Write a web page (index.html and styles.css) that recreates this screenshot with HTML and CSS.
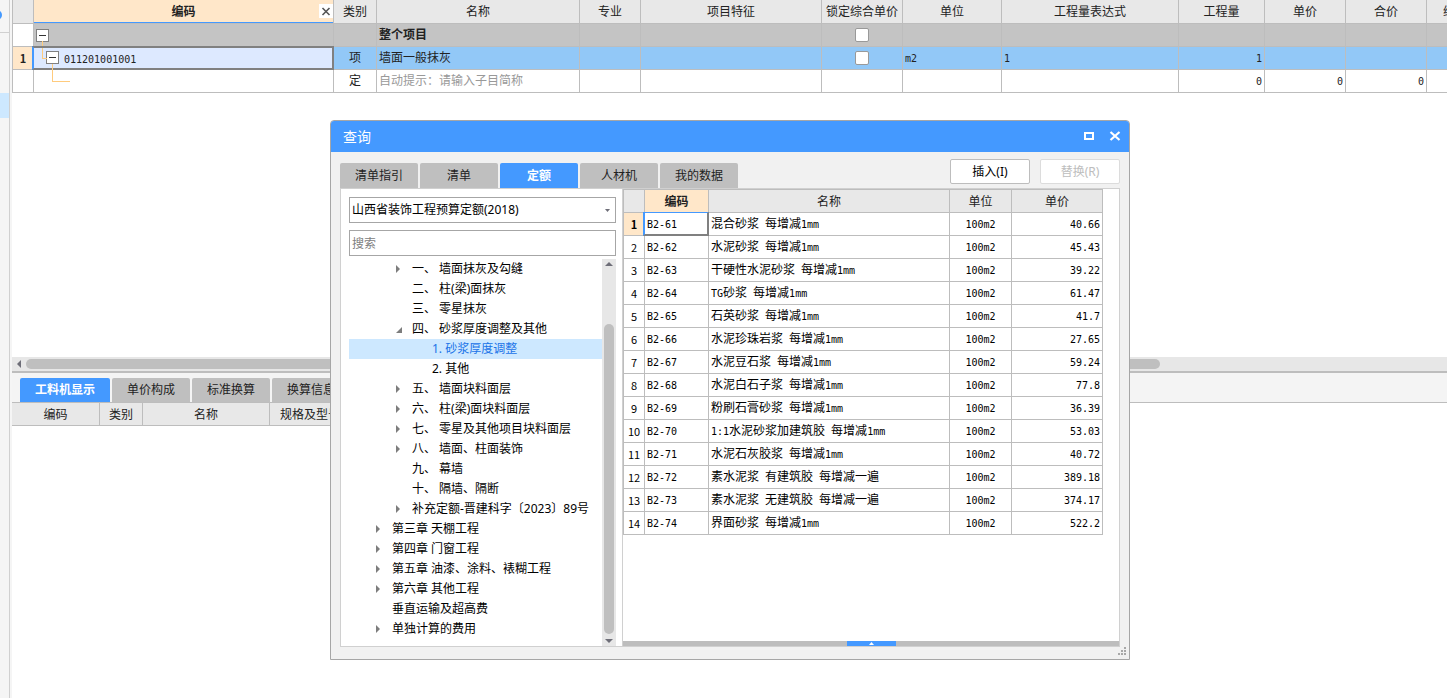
FILE: index.html
```html
<!DOCTYPE html>
<html lang="zh-CN">
<head>
<meta charset="utf-8">
<title>查询</title>
<link rel="stylesheet" href="styles.css">
</head>
<body>
<div class="app">
  <aside class="rail"><span class="rail-dot"></span><div class="rail-head"></div><div class="rail-mark"></div></aside>
  <main class="workspace">
    <section class="pane-top">
      <div class="grid-area">
        <table class="grid main-grid">
          <colgroup><col class="w22"><col class="w300"><col class="w43"><col class="w203"><col class="w61"><col class="w181"><col class="w81"><col class="w99"><col class="w177"><col class="w86"><col class="w81"><col class="w81"><col class="w81"></colgroup>
          <thead><tr><th></th><th class="active">编码<button class="col-close" aria-label="关闭"><svg width="14" height="14" viewBox="0 0 14 14"><path d="M3.500 4L10.500 11M10.500 4L3.500 11" stroke="#555" stroke-width="1.600"/></svg></button></th><th>类别</th><th>名称</th><th>专业</th><th>项目特征</th><th>锁定综合单价</th><th>单位</th><th>工程量表达式</th><th>工程量</th><th>单价</th><th>合价</th><th>综合单价</th></tr></thead>
          <tbody>
            <tr class="project"><td class="idx"></td><td class="node root"><button class="fold" aria-label="折叠"></button></td><td></td><td><b>整个项目</b></td><td></td><td></td><td class="center"><input type="checkbox" aria-label="锁定综合单价"></td><td></td><td></td><td></td><td></td><td></td><td></td></tr>
            <tr class="picked"><td class="idx current">1</td><td class="node child focus"><button class="fold" aria-label="折叠"></button><span class="n">011201001001</span></td><td class="center">项</td><td>墙面一般抹灰</td><td></td><td></td><td class="center"><input type="checkbox" aria-label="锁定综合单价"></td><td><span class="n">m2</span></td><td><span class="n">1</span></td><td class="right"><span class="n">1</span></td><td></td><td></td><td></td></tr>
            <tr><td class="idx"></td><td class="node leaf"></td><td class="center">定</td><td class="hint">自动提示：请输入子目简称</td><td></td><td></td><td></td><td></td><td></td><td class="right"><span class="n">0</span></td><td class="right"><span class="n">0</span></td><td class="right"><span class="n">0</span></td><td></td></tr>
          </tbody>
        </table>
      </div>
      <div class="hscroll"><svg width="14" height="14" viewBox="0 0 14 14"><path d="M9 3v8L5 7z" fill="#6e6e78"/></svg><div class="hthumb"></div></div>
    </section>
    <section class="pane-bottom">
      <nav class="tabs lower"><button class="tab first on">工料机显示</button><button class="tab">单价构成</button><button class="tab">标准换算</button><button class="tab">换算信息</button></nav>
      <table class="grid detail-grid">
        <colgroup><col class="w88"><col class="w43"><col class="w127"><col class="w81"></colgroup>
        <thead><tr><th>编码</th><th>类别</th><th>名称</th><th>规格及型号</th></tr></thead>
      </table>
    </section>
  </main>

  <div class="dialog" role="dialog" aria-labelledby="dialog-title">
    <header class="titlebar">
      <h1 id="dialog-title">查询</h1>
      <button class="win" aria-label="最大化"><svg width="12" height="12" viewBox="0 0 12 12"><path d="M2 2h8v6H2z" fill="none" stroke="#fff" stroke-width="2"/></svg></button>
      <button class="win" aria-label="关闭"><svg width="12" height="12" viewBox="0 0 12 12"><path d="M1.500 1L10.500 9M10.500 1L1.500 9" stroke="#fff" stroke-width="2.200"/></svg></button>
    </header>
    <div class="toolbar">
      <nav class="tabs"><button class="tab">清单指引</button><button class="tab">清单</button><button class="tab on">定额</button><button class="tab">人材机</button><button class="tab">我的数据</button></nav>
      <div class="actions"><button class="action">插入(I)</button><button class="action" disabled>替换(R)</button></div>
    </div>
    <div class="content">
      <div class="left">
        <div class="combo"><select aria-label="定额库"><option>山西省装饰工程预算定额(2018)</option></select><svg width="7" height="4" viewBox="0 0 7 4"><path d="M1 0h5L3.500 3z" fill="#6e6e78"/></svg></div>
        <input class="search" type="text" placeholder="搜索" aria-label="搜索">
        <div class="tree-wrap">
          <ul class="tree" role="tree">
            <li class="l1 shut" role="treeitem">一、 墙面抹灰及勾缝</li>
            <li class="l1" role="treeitem">二、 柱(梁)面抹灰</li>
            <li class="l1" role="treeitem">三、 零星抹灰</li>
            <li class="l1 open" role="treeitem">四、 砂浆厚度调整及其他</li>
            <li class="l2 selected" role="treeitem" aria-selected="true">1. 砂浆厚度调整</li>
            <li class="l2" role="treeitem">2. 其他</li>
            <li class="l1 shut" role="treeitem">五、 墙面块料面层</li>
            <li class="l1 shut" role="treeitem">六、 柱(梁)面块料面层</li>
            <li class="l1 shut" role="treeitem">七、 零星及其他项目块料面层</li>
            <li class="l1 shut" role="treeitem">八、 墙面、柱面装饰</li>
            <li class="l1" role="treeitem">九、 幕墙</li>
            <li class="l1" role="treeitem">十、 隔墙、隔断</li>
            <li class="l1 shut" role="treeitem">补充定额-晋建科字〔2023〕89号</li>
            <li class="l0 shut" role="treeitem">第三章 天棚工程</li>
            <li class="l0 shut" role="treeitem">第四章 门窗工程</li>
            <li class="l0 shut" role="treeitem">第五章 油漆、涂料、裱糊工程</li>
            <li class="l0 shut" role="treeitem">第六章 其他工程</li>
            <li class="l0" role="treeitem">垂直运输及超高费</li>
            <li class="l0 shut" role="treeitem">单独计算的费用</li>
          </ul>
          <div class="vscroll"><svg width="14" height="10" viewBox="0 0 14 10"><path d="M3 7h8L7 3z" fill="#6e6e78"/></svg><div class="vthumb"></div><svg width="14" height="10" viewBox="0 0 14 10"><path d="M3 3h8L7 7z" fill="#6e6e78"/></svg></div>
        </div>
      </div>
      <div class="result">
        <div class="result-body">
          <table class="grid quota-grid">
            <colgroup><col class="w22"><col class="w64"><col class="w241"><col class="w62"><col class="w91"></colgroup>
            <thead><tr><th></th><th class="active">编码</th><th>名称</th><th>单位</th><th>单价</th></tr></thead>
            <tbody>
              <tr><td class="idx current">1</td><td class="focus"><span class="n">B2-61</span></td><td>混合砂浆<span class="n"> </span>每增减<span class="n">1mm</span></td><td class="center"><span class="n">100m2</span></td><td class="right"><span class="n">40.66</span></td></tr>
              <tr><td class="idx">2</td><td><span class="n">B2-62</span></td><td>水泥砂浆<span class="n"> </span>每增减<span class="n">1mm</span></td><td class="center"><span class="n">100m2</span></td><td class="right"><span class="n">45.43</span></td></tr>
              <tr><td class="idx">3</td><td><span class="n">B2-63</span></td><td>干硬性水泥砂浆<span class="n"> </span>每增减<span class="n">1mm</span></td><td class="center"><span class="n">100m2</span></td><td class="right"><span class="n">39.22</span></td></tr>
              <tr><td class="idx">4</td><td><span class="n">B2-64</span></td><td><span class="n">TG</span>砂浆<span class="n"> </span>每增减<span class="n">1mm</span></td><td class="center"><span class="n">100m2</span></td><td class="right"><span class="n">61.47</span></td></tr>
              <tr><td class="idx">5</td><td><span class="n">B2-65</span></td><td>石英砂浆<span class="n"> </span>每增减<span class="n">1mm</span></td><td class="center"><span class="n">100m2</span></td><td class="right"><span class="n">41.7</span></td></tr>
              <tr><td class="idx">6</td><td><span class="n">B2-66</span></td><td>水泥珍珠岩浆<span class="n"> </span>每增减<span class="n">1mm</span></td><td class="center"><span class="n">100m2</span></td><td class="right"><span class="n">27.65</span></td></tr>
              <tr><td class="idx">7</td><td><span class="n">B2-67</span></td><td>水泥豆石浆<span class="n"> </span>每增减<span class="n">1mm</span></td><td class="center"><span class="n">100m2</span></td><td class="right"><span class="n">59.24</span></td></tr>
              <tr><td class="idx">8</td><td><span class="n">B2-68</span></td><td>水泥白石子浆<span class="n"> </span>每增减<span class="n">1mm</span></td><td class="center"><span class="n">100m2</span></td><td class="right"><span class="n">77.8</span></td></tr>
              <tr><td class="idx">9</td><td><span class="n">B2-69</span></td><td>粉刷石膏砂浆<span class="n"> </span>每增减<span class="n">1mm</span></td><td class="center"><span class="n">100m2</span></td><td class="right"><span class="n">36.39</span></td></tr>
              <tr><td class="idx">10</td><td><span class="n">B2-70</span></td><td><span class="n">1:1</span>水泥砂浆加建筑胶<span class="n"> </span>每增减<span class="n">1mm</span></td><td class="center"><span class="n">100m2</span></td><td class="right"><span class="n">53.03</span></td></tr>
              <tr><td class="idx">11</td><td><span class="n">B2-71</span></td><td>水泥石灰胶浆<span class="n"> </span>每增减<span class="n">1mm</span></td><td class="center"><span class="n">100m2</span></td><td class="right"><span class="n">40.72</span></td></tr>
              <tr><td class="idx">12</td><td><span class="n">B2-72</span></td><td>素水泥浆<span class="n"> </span>有建筑胶<span class="n"> </span>每增减一遍</td><td class="center"><span class="n">100m2</span></td><td class="right"><span class="n">389.18</span></td></tr>
              <tr><td class="idx">13</td><td><span class="n">B2-73</span></td><td>素水泥浆<span class="n"> </span>无建筑胶<span class="n"> </span>每增减一遍</td><td class="center"><span class="n">100m2</span></td><td class="right"><span class="n">374.17</span></td></tr>
              <tr><td class="idx">14</td><td><span class="n">B2-74</span></td><td>界面砂浆<span class="n"> </span>每增减<span class="n">1mm</span></td><td class="center"><span class="n">100m2</span></td><td class="right"><span class="n">522.2</span></td></tr>
            </tbody>
          </table>
        </div>
        <div class="splitter"><button class="pull" aria-label="展开"><svg width="5" height="3" viewBox="0 0 5 3"><path d="M0 3h5L2.500 0z" fill="#fff"/></svg></button></div>
      </div>
    </div>
    <svg class="grip" width="9" height="9" viewBox="0 0 9 9" fill="#a8a8a8"><path d="M6 0h2v2H6zM3 3h2v2H3zM6 3h2v2H6zM0 6h2v2H0zM3 6h2v2H3zM6 6h2v2H6z"/></svg>
  </div>
</div>
</body>
</html>
```
FILE: styles.css
```css
* { box-sizing: border-box; }
body {
  margin: 0;
  font: 12px/20px "Noto Sans", "Noto Sans CJK SC", sans-serif;
  color: #000;
  background: #fff;
}
button, input, select { font: inherit; color: inherit; margin: 0; padding: 0; }
button { border: 0; }
svg { display: block; flex: none; }

.app { position: relative; display: flex; height: 100vh; overflow: hidden; }

/* left rail */
.rail {
  position: relative;
  flex: none;
  width: 12px;
  background: linear-gradient(90deg, #f5f5f5 9px, #d0d0d0 9px, #d0d0d0 10px, #f5f5f5 10px);
  overflow: hidden;
}
.rail-dot { position: absolute; left: -8px; top: 10px; width: 10px; height: 10px; border-radius: 50%; background: #4499ff; }
.rail-head { width: 9px; height: 33px; border-bottom: 1px solid #d0d0d0; }
.rail-mark { width: 9px; height: 25px; margin-top: 60px; background: #cde8ff; }

.workspace { flex: 1; min-width: 0; display: flex; flex-direction: column; }
.pane-top { flex: 371 371 0; min-height: 0; display: flex; flex-direction: column; border-bottom: 2px solid #bdbdbd; }
.pane-bottom { flex: 325 325 0; min-height: 0; }
.grid-area { flex: 1; min-height: 0; overflow: hidden; }

/* data grids */
.grid { table-layout: fixed; border-collapse: separate; border-spacing: 0; font-family: "Noto Sans CJK SC", sans-serif; line-height: 18px; }
.grid th, .grid td { border-right: 1px solid #bdbdbd; border-bottom: 1px solid #bdbdbd; white-space: nowrap; position: relative; }
.grid th { height: 23px; padding: 0; background: #e8e8e8; font-weight: 400; color: #222; overflow: hidden; }
.grid td { height: 23px; padding: 0 2px 2px; text-align: left; }
.grid td.center { text-align: center; }
.grid td.right { text-align: right; }
.grid td.idx { padding: 0; text-align: center; border-left: 1px solid #bdbdbd; font-size: 11px; }
.grid td.idx.current { background: #ffe7c9; font-weight: 700; }
.grid th.active { background: #ffe7c9; font-weight: 700; }
.grid th.active::after { content: ""; position: absolute; left: 0; right: -1px; bottom: -1px; height: 1px; background: #4499ff; }
.n { font-family: "DejaVu Sans Mono", monospace; font-size: 10px; line-height: 16px; white-space: pre; }
.focus::after {
  content: "";
  position: absolute;
  inset: -1px -1px -1px -2px;
  border: 2px solid #808080;
  border-left-color: #4499ff;
  pointer-events: none;
}
.quota-grid .focus::after { border-top: 1px solid #4499ff; }

.main-grid { width: 1496px; color: #222; }
.main-grid th { height: 24px; padding-bottom: 2px; }
.main-grid th.active::after { height: 2px; }
.main-grid th:first-child { border-left: 1px solid #bdbdbd; }
.project td { background: #c4c4c4; }
.project td.idx { background: #fff; }
.picked td { background: #92c8f7; }
.picked td.focus { background: #dde9ff; }
.main-grid .hint { color: #999; }
.col-close { position: absolute; right: 0; top: 4px; width: 14px; height: 14px; background: #fff; }
.grid input[type="checkbox"] {
  appearance: none;
  display: block;
  width: 14px;
  height: 14px;
  margin: 0 auto;
  border: 1px solid #999;
  border-radius: 2px;
  background: #fff;
}
.grid td.center:has(input) { padding: 0 2px; }
.fold {
  display: block;
  flex: none;
  width: 13px;
  height: 13px;
  border: 1px solid #808080;
  background: linear-gradient(#333, #333) center / 7px 1px no-repeat #fff;
}
.grid td.root, .grid td.child { padding-top: 0; padding-bottom: 0; }
.grid td.child { padding-left: 12px; }
.child .fold { float: left; margin-top: 2px; }
.child .n { margin-left: 5px; }
.child::before, .leaf::before {
  content: "";
  position: absolute;
  left: 8px;
  top: -6px;
  width: 4px;
  height: 17px;
  border: solid #ffcb7d;
  border-width: 0 0 1px 1px;
}
.leaf::before { left: 18px; width: 17px; }

.w22 { width: 22px; } .w43 { width: 43px; } .w61 { width: 61px; } .w62 { width: 62px; }
.w64 { width: 64px; } .w81 { width: 81px; } .w86 { width: 86px; } .w88 { width: 88px; }
.w91 { width: 91px; } .w99 { width: 99px; } .w127 { width: 127px; } .w177 { width: 177px; }
.w181 { width: 181px; } .w203 { width: 203px; } .w241 { width: 241px; } .w300 { width: 300px; }

.hscroll { flex: none; height: 14px; display: flex; align-items: center; background: #e7e7e7; }
.hthumb { width: 79%; height: 10px; border-radius: 5px; background: #bfbfbf; }

/* tabs */
.tabs { display: flex; gap: 2px; }
.tab { width: 78px; height: 25px; border-radius: 2px 2px 0 0; background: #bfbfbf; color: #222; }
.tab.on { background: #4499ff; color: #fff; font-weight: 700; }
.lower { height: 30px; padding: 5px 8px 0; background: #f4f4f4; border-bottom: 1px solid #bdbdbd; }
.lower .tab { height: 24px; }
.lower .first { width: 90px; }
.detail-grid { width: 339px; }

/* query dialog */
.dialog {
  position: absolute;
  left: 330px;
  top: 120px;
  width: 800px;
  height: 540px;
  display: flex;
  flex-direction: column;
  border: 1px solid #a6a6a6;
  border-radius: 4px 4px 0 0;
  background: #f1f1f1;
  overflow: hidden;
}
.titlebar { flex: none; display: flex; align-items: center; gap: 14px; height: 31px; padding: 0 8px 0 12px; background: #4499ff; color: #fff; }
.titlebar h1 { flex: 1; margin: 0; font-size: 14px; font-weight: 400; }
.win { width: 12px; height: 12px; background: none; }
.toolbar { flex: none; display: flex; justify-content: space-between; padding: 7px 9px 0; }
.toolbar .tabs { padding-top: 4px; }
.actions { display: flex; gap: 10px; height: 29px; }
.action { width: 80px; height: 25px; border: 1px solid #bdbdbd; border-radius: 2px; background: #fff; }
.action:disabled { color: #bdbdbd; border-color: #dcdcdc; }
.content { flex: 1; min-height: 0; display: flex; margin: 0 9px 12px; border: 1px solid #d0d0d0; background: #fff; }
.left { flex: none; width: 281px; display: flex; flex-direction: column; padding: 8px 6px 0 8px; }
.combo { position: relative; }
.combo svg { position: absolute; right: 5px; top: 12px; }
.combo select, .search { display: block; width: 100%; height: 26px; padding: 0 2px; border: 1px solid #a6a6a6; border-radius: 0; background: #fff; }
.combo select { appearance: none; }
.search { margin-top: 7px; }
.search::placeholder { color: #808080; }
.tree-wrap { flex: 1; min-height: 0; display: flex; margin-top: 3px; }
.tree { flex: 1; min-width: 0; margin: 0; padding: 0; list-style: none; overflow: hidden; }
.tree li { position: relative; height: 20px; white-space: nowrap; }
.l0 { padding-left: 43px; }
.l1 { padding-left: 63px; }
.l2 { padding-left: 83px; }
.selected { background: #cde8ff; color: #1a73e8; }
.shut::before, .open::before { content: ""; position: absolute; top: 6px; border: solid transparent; }
.shut::before { border-width: 4px 0 4px 4px; border-left-color: #7d7d7d; }
.l0.shut::before { left: 27px; }
.l1.shut::before { left: 47px; }
.open::before { left: 47px; border-width: 0 0 6px 6px; border-bottom-color: #7d7d7d; top: 8px; }
.vscroll { width: 14px; display: flex; flex-direction: column; align-items: center; background: #e7e7e7; }
.vthumb { width: 10px; height: 80%; margin-top: auto; margin-bottom: 2px; border-radius: 5px; background: #bfbfbf; }
.result { flex: 1; min-width: 0; display: flex; flex-direction: column; border-left: 1px solid #d0d0d0; }
.result-body { flex: 1; min-height: 0; overflow: hidden; }
.quota-grid { width: 480px; border-top: 1px solid #bdbdbd; }
.quota-grid th:first-child { border-left: 1px solid #bdbdbd; }
.splitter { flex: none; display: flex; justify-content: center; height: 5px; background: #bdbdbd; }
.pull { display: flex; align-items: center; justify-content: center; width: 49px; height: 5px; background: #4499ff; }
.grip { position: absolute; right: 2px; bottom: 3px; }
```
